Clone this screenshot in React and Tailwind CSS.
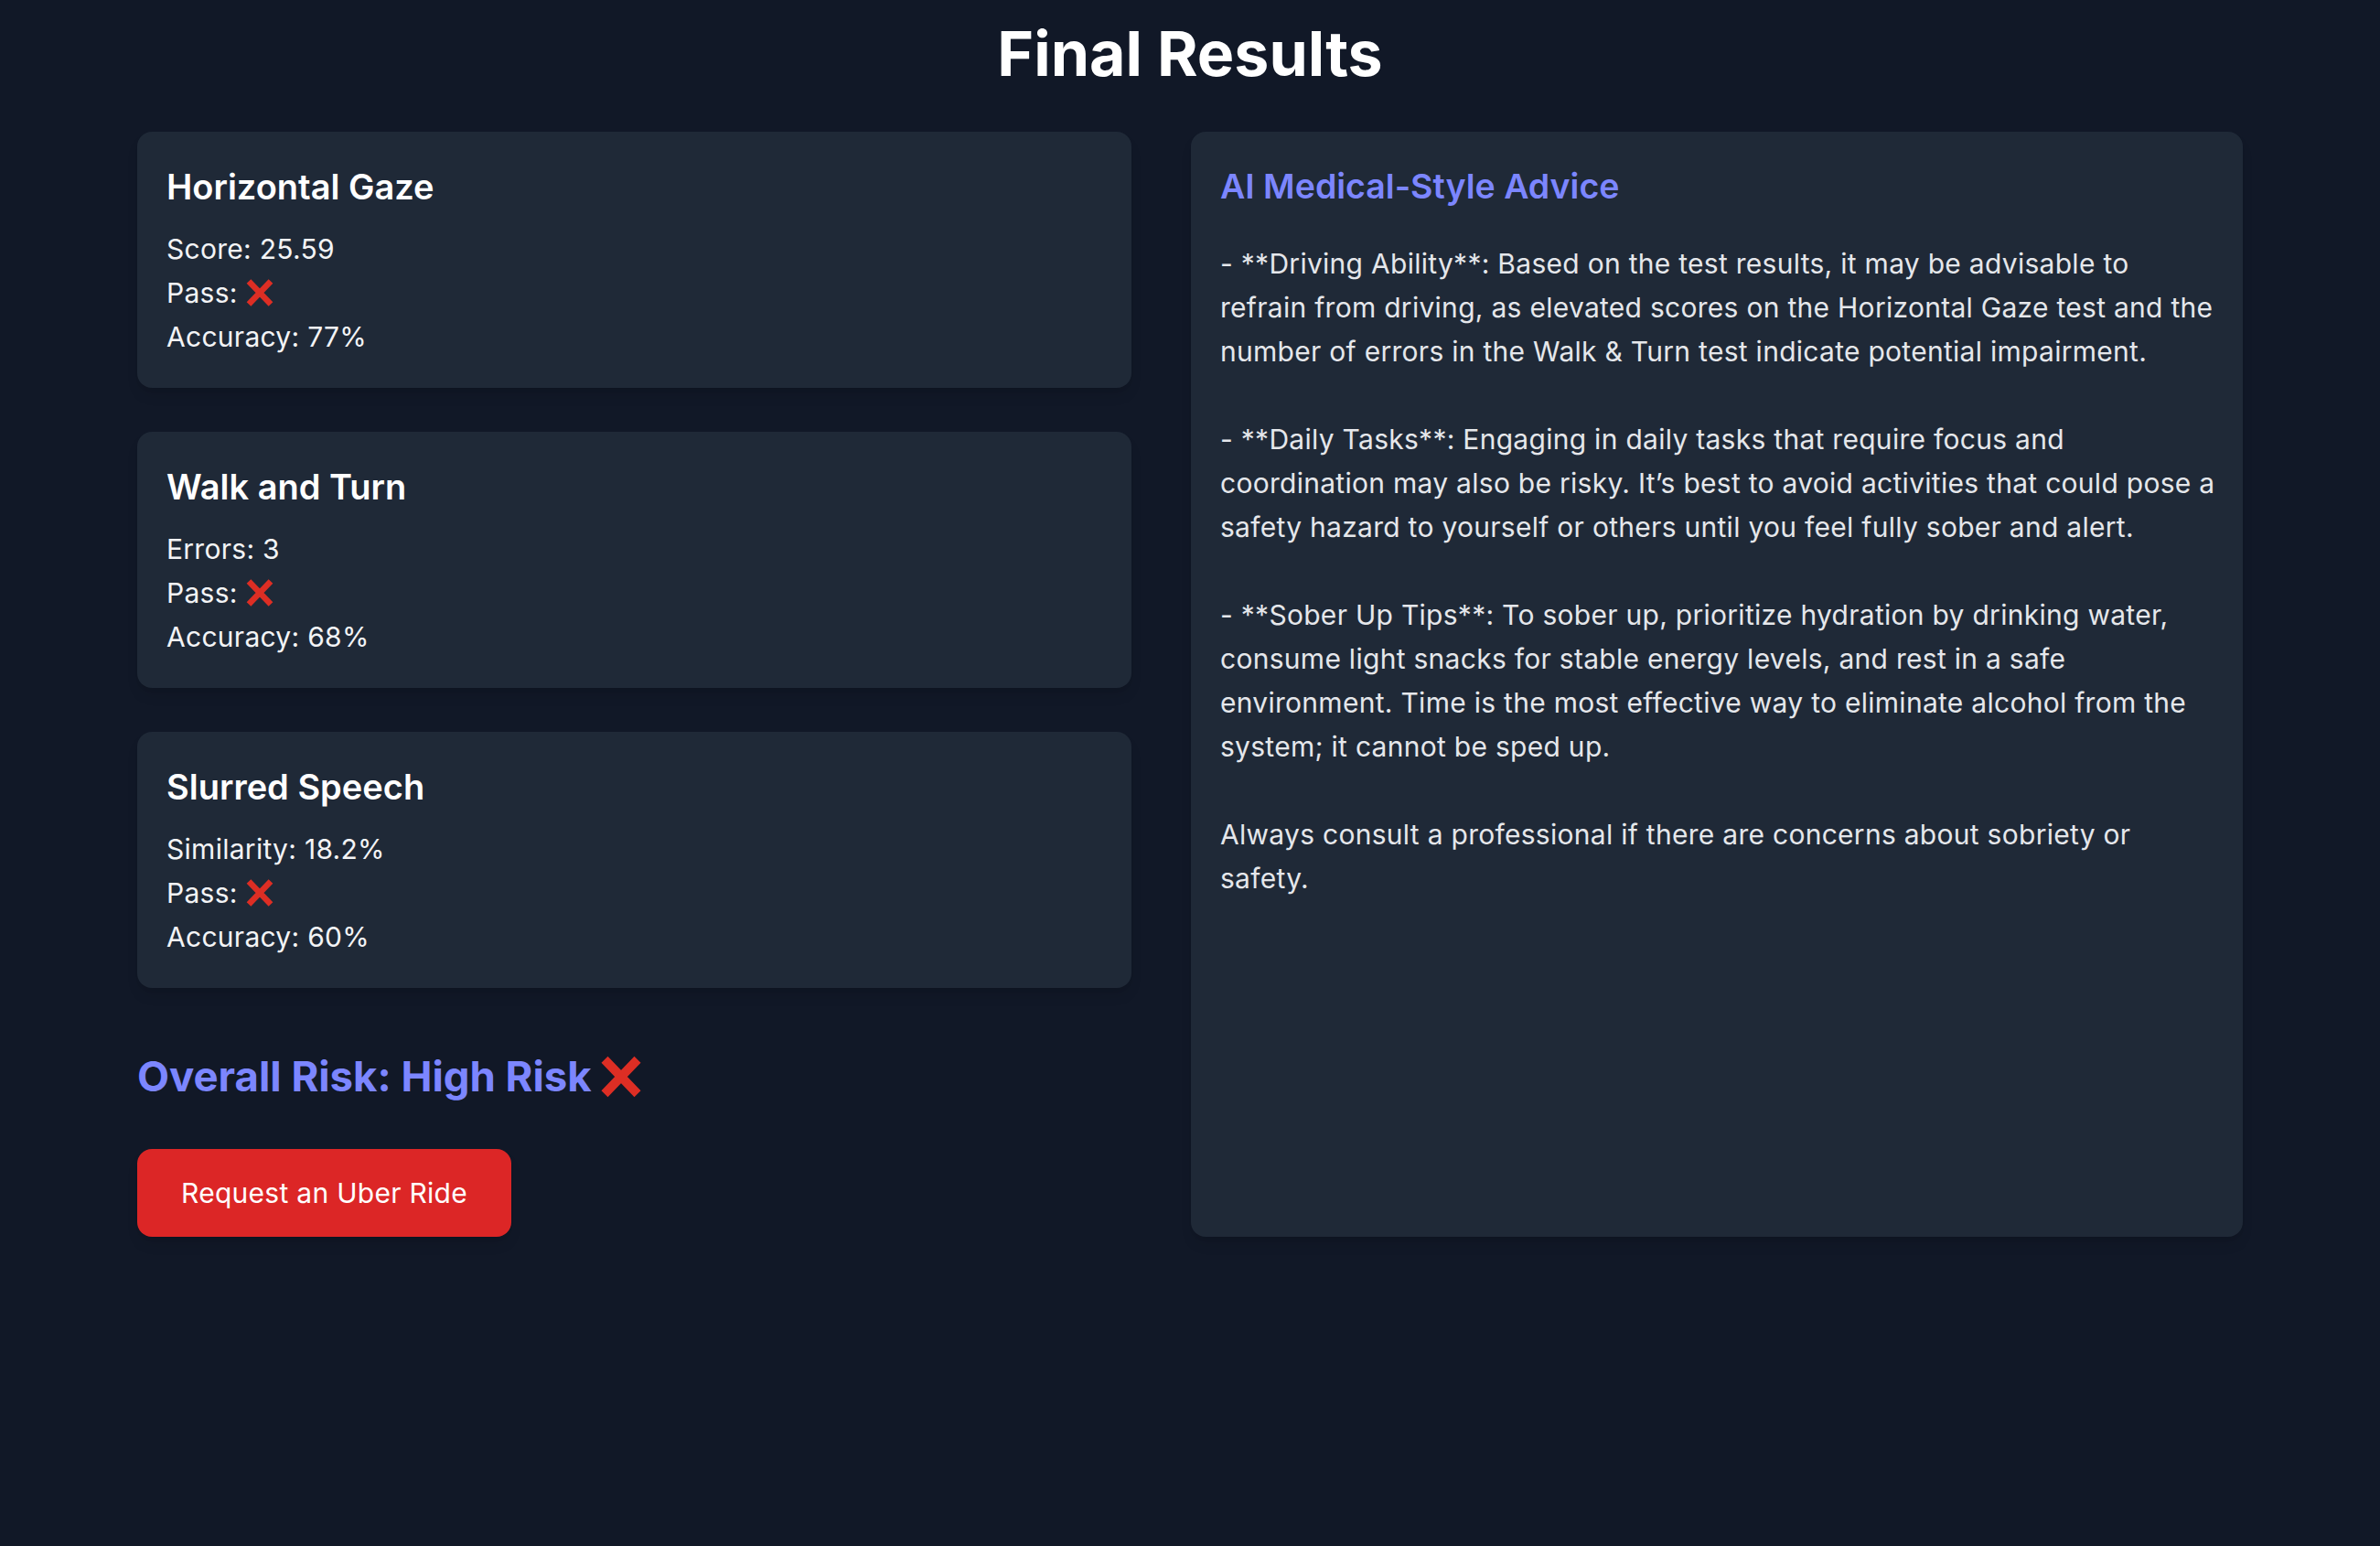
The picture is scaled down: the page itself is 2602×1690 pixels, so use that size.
const results = [
  { title: 'Horizontal Gaze', lines: ['Score: 25.59'], accuracy: 77 },
  { title: 'Walk and Turn', lines: ['Errors: 3'], accuracy: 68 },
  { title: 'Slurred Speech', lines: ['Similarity: 18.2%'], accuracy: 60 },
];

// advice paragraphs, broken where the reference wraps them
const advice = [
  [
    '- **Driving Ability**: Based on the test results, it may be advisable to',
    'refrain from driving, as elevated scores on the Horizontal Gaze test and the',
    'number of errors in the Walk & Turn test indicate potential impairment.',
  ],
  [
    '- **Daily Tasks**: Engaging in daily tasks that require focus and',
    'coordination may also be risky. It’s best to avoid activities that could pose a',
    'safety hazard to yourself or others until you feel fully sober and alert.',
  ],
  [
    '- **Sober Up Tips**: To sober up, prioritize hydration by drinking water,',
    'consume light snacks for stable energy levels, and rest in a safe',
    'environment. Time is the most effective way to eliminate alcohol from the',
    'system; it cannot be sped up.',
  ],
  ['Always consult a professional if there are concerns about sobriety or', 'safety.'],
];

// red cross mark, like the ❌ emoji
const Cross = ({ className }) => (
  <svg viewBox="0 0 32 32" className={className}>
    <path d="M4 3.5 L28 28.5 M28 3.5 L4 28.5" stroke="#dd2e24" strokeWidth="6.5" fill="none" />
  </svg>
);

const ResultCard = ({ title, lines, accuracy }) => (
  <div className="bg-[#1f2937] rounded-2xl p-8 shadow-lg">
    <h2 className="text-[38px] leading-[56px] font-semibold text-white mb-4">{title}</h2>
    <div className="text-[30px] leading-[48px] tracking-[0.28px] text-gray-100">
      {lines.map((l) => (
        <p key={l}>{l}</p>
      ))}
      <p className="flex items-center">
        Pass:<Cross className="w-8 h-8 ml-2" />
      </p>
      <p>Accuracy: {accuracy}%</p>
    </div>
  </div>
);

export default function App() {
  return (
    <div className="min-h-screen bg-[#111827] font-['Inter','Noto_Sans',sans-serif] pt-6">
      <h1 className="text-[68px] leading-[68px] font-bold text-white text-center mb-[52px]">Final Results</h1>

      <div className="flex justify-center gap-[65px]">
        {/* Left column */}
        <div className="w-[1087px] flex flex-col">
          <div className="flex flex-col gap-12">
            {results.map((r) => (
              <ResultCard key={r.title} {...r} />
            ))}
          </div>

          <h2 className="mt-[69px] flex items-center text-[45.5px] leading-[56px] font-bold text-[#7c86ff]">
            Overall Risk: High Risk
            <Cross className="w-12 h-12 ml-2" />
          </h2>

          <div className="mt-[51px]">
            <button className="bg-[#dc2626] hover:bg-red-700 text-white text-[30px] leading-[48px] tracking-[0.28px] px-12 py-6 rounded-2xl shadow-lg">
              Request an Uber Ride
            </button>
          </div>
        </div>

        {/* Right column */}
        <div className="w-[1150px] bg-[#1f2937] rounded-2xl p-8 shadow-lg">
          <h2 className="text-[37.5px] leading-[56px] font-semibold text-[#7c86ff]">AI Medical-Style Advice</h2>
          <div className="mt-8 text-[30px] leading-[48px] tracking-[0.28px] text-gray-200 flex flex-col gap-12">
            {advice.map((para, i) => (
              <p key={i} className="whitespace-nowrap">
                {para.map((line, j) => (
                  <span key={j} className="block">{line}</span>
                ))}
              </p>
            ))}
          </div>
        </div>
      </div>
    </div>
  );
}
